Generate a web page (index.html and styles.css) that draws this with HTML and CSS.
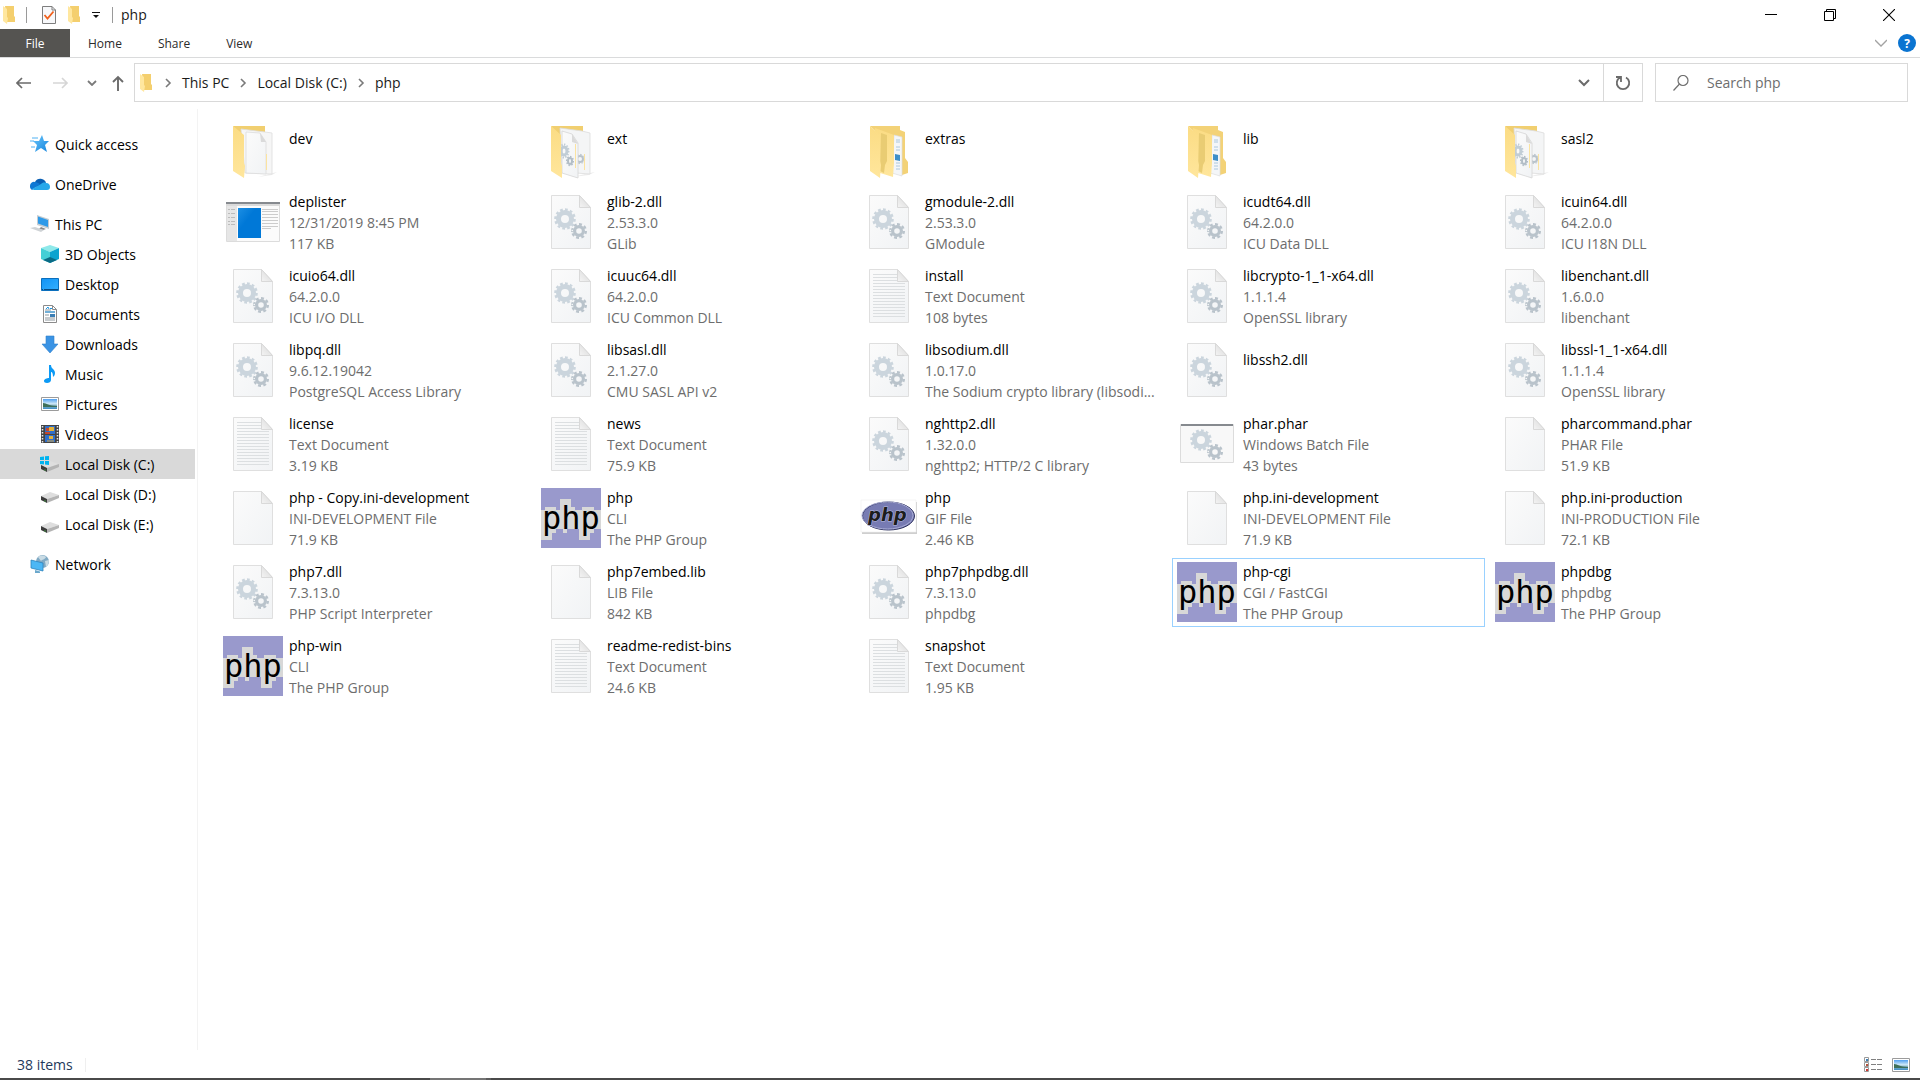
FILE: index.html
```html
<!DOCTYPE html>
<html lang="en">
<head>
<meta charset="utf-8">
<title>php</title>
<link rel="stylesheet" href="styles.css">
</head>
<body>
<svg class="defs" aria-hidden="true">
  <defs>
    <linearGradient id="paper" x1="0" y1="0" x2="1" y2="1"><stop offset="0" stop-color="#fbfbfb"/><stop offset="1" stop-color="#f1f3f5"/></linearGradient>
    <linearGradient id="fold" x1="0" y1="1" x2="1" y2="0"><stop offset="0" stop-color="#f4f4f4"/><stop offset="1" stop-color="#d6d6d6"/></linearGradient>
    <linearGradient id="flap" x1="0" y1="0" x2="0" y2="1"><stop offset="0" stop-color="#fbdc84"/><stop offset="1" stop-color="#ffe69c"/></linearGradient>
    <linearGradient id="blue" x1="0" y1="0" x2="1" y2="1"><stop offset="0" stop-color="#1d8fe4"/><stop offset=".4" stop-color="#0078d7"/></linearGradient>
    <linearGradient id="screen" x1="0" y1="0" x2="1" y2="1"><stop offset="0" stop-color="#1193f5"/><stop offset="1" stop-color="#35b0ff"/></linearGradient>
    <linearGradient id="sky" x1="0" y1="0" x2="0" y2="1"><stop offset="0" stop-color="#4f9ff0"/><stop offset=".5" stop-color="#d5ecf8"/><stop offset=".6" stop-color="#8fb9c9"/><stop offset="1" stop-color="#3f8ec6"/></linearGradient>
    <linearGradient id="star" x1="0" y1="0" x2="1" y2="1"><stop offset="0" stop-color="#6ac6fb"/><stop offset="1" stop-color="#1484dd"/></linearGradient>
  </defs>
  <symbol id="gears" viewBox="0 0 60 60">
    <g fill="none" stroke="#cbd5dd">
      <circle cx="24" cy="27" r="6.5" stroke-width="5"/>
      <circle cx="24" cy="27" r="9.5" stroke-width="2.6" pathLength="24" stroke-dasharray="1.1 .9"/>
    </g>
    <g fill="none" stroke="#b9c3cb">
      <circle cx="38" cy="39" r="4.4" stroke-width="3.2"/>
      <circle cx="38" cy="39" r="6.8" stroke-width="2.4" pathLength="16" stroke-dasharray="1.1 .9"/>
    </g>
  </symbol>
  <symbol id="blank" viewBox="0 0 60 60">
    <path d="M10.5 3.5h28l11 12v41h-39z" fill="url(#paper)" stroke="#dfdfdf"/>
    <path d="M38.500 3.500v12h11z" fill="url(#fold)" stroke="#d9d9d9"/>
  </symbol>
  <symbol id="dll" viewBox="0 0 60 60"><use href="#blank"/><use href="#gears"/></symbol>
  <symbol id="txt" viewBox="0 0 60 60">
    <use href="#blank"/>
    <path d="M14 8.500h24M14 11.500h24M14 14.500h24M14 17.500h32M14 20.500h32M14 23.500h32M14 26.500h32M14 29.500h32M14 32.500h32M14 35.500h32M14 38.500h32M14 41.500h32M14 44.500h32M14 47.500h32M14 50.500h32" stroke="#dcdfe1"/>
  </symbol>
  <symbol id="exe" viewBox="0 0 60 60">
    <path d="M3.500 10.500h53v39h-53z" fill="#fbfbfb" stroke="#dcdcdc"/>
    <path d="M4 14h10v35H4z" fill="#e6e6e6"/>
    <path d="M3 10h54v2H3z" fill="#868a8f"/>
    <path d="M3 12h54v2H3z" fill="#dadada"/>
    <path d="M5 17.500h7M5 21.500h7M5 25.500h7M5 29.500h7M5 32.500h7" stroke="#bcbcbc" stroke-dasharray="2 1 4"/>
    <path d="M39 17.500h16M39 19.500h16M39 22.500h16M39 25.500h16M39 28.500h16M39 31.500h16M39 34.500h16M39 36.500h9" stroke="#cccccc"/>
    <path d="M15 16h23v30H15z" fill="url(#blue)"/>
  </symbol>
  <symbol id="bat" viewBox="0 0 60 60">
    <path d="M3.500 10.500h53v38h-53z" fill="#f8f8f8" stroke="#dcdcdc"/>
    <path d="M4 10h52v2H4z" fill="#868a8f"/>
    <use href="#gears" y="-1"/>
  </symbol>
  <symbol id="folder-page" viewBox="0 0 60 60">
    <path d="M46 54l8-2-5 3-14 2z" fill="#ececec"/>
    <path d="M10 6h32v20H20z" fill="#f1cf70"/>
    <path d="M18 9l24 3 7 1v41l-27-1z" fill="#f6f6f6" stroke="#dddddd" stroke-width=".8"/>
    <path d="M23 12l14 1 6 9v32l-20-1z" fill="url(#paper)" stroke="#dcdcdc" stroke-width=".8"/>
    <path d="M37 13l1 9h5z" fill="#dadada"/>
    <path d="M43.500 34v16" stroke="#fbe3a0"/>
    <path d="M10 6l11 9v28l1 3-1 12-11-7z" fill="url(#flap)"/>
  </symbol>
  <symbol id="folder-gears" viewBox="0 0 60 60">
    <path d="M44 54l10-2-6 3-16 2z" fill="#ececec"/>
    <path d="M10 6h32v16H20z" fill="#f1cf70"/>
    <path d="M19 8l22 3 8 2v41l-28-2z" fill="#f4f5f6" stroke="#dcdcdc" stroke-width=".8"/>
    <g fill="none" stroke="#b9c3cb"><circle cx="39" cy="39" r="3" stroke-width="2"/><circle cx="39" cy="39" r="4.600" pathLength="16" stroke-dasharray="1"/></g>
    <path d="M21 11l10 3 6 9v35l-16-5z" fill="url(#paper)" stroke="#d6d6d6" stroke-width=".8"/>
    <path d="M31 14v8l6 2z" fill="#dadada"/>
    <g fill="none" stroke="#c1cdd6"><ellipse cx="23" cy="31" rx="3" ry="4" stroke-width="3"/><ellipse cx="23" cy="31" rx="4.500" ry="6.500" stroke-width="2" pathLength="24" stroke-dasharray="1"/></g>
    <g fill="none" stroke="#b2bdc6"><ellipse cx="29" cy="41" rx="2" ry="3" stroke-width="2"/><ellipse cx="29" cy="41" rx="3.300" ry="4.600" stroke-width="1.500" pathLength="16" stroke-dasharray="1"/></g>
    <path d="M34.500 24v24M43.500 34v16" stroke="#fbe3a0"/>
    <path d="M10 6l10 9v28l1 3v12l-11-7z" fill="url(#flap)"/>
  </symbol>
  <symbol id="folder-folders" viewBox="0 0 60 60">
    <path d="M11 6h30v4l5 2v26l3 4v11l-6 2-22-40z" fill="#f3d277"/>
    <path d="M35 15l8 2v39l-10-3z" fill="#f4f6f8" stroke="#dddddd" stroke-width=".7"/>
    <path d="M37 20h4M37 22h4M37 27h4M37 30h4M37 43h4M37 46h4M37 49h4" stroke="#9bbdd6" stroke-width=".8"/>
    <path d="M36 34l5 1v6l-5-1z" fill="#3e8fc8"/>
    <path d="M16 8l19 7v28l-1 14-16-5z" fill="url(#flap)"/>
    <path d="M22 13l6 2v26l-2 4-1 8-4-2z" fill="#e9cc73"/>
    <path d="M11 6l10 9v26l1 4-1 13-10-7z" fill="url(#flap)"/>
  </symbol>
  <symbol id="phpexe" viewBox="0 0 60 60">
    <path d="M0 0h60v60H0z" fill="#9999cc"/>
    <path d="M19 11h11v8h4v3h7v-3h12v3h7v19h-7v4h-4v3h-0v4H38v-11h-4v-0h-8v4h-4v-4h-7v4h-4v7H0V22h4v-3h11v3h4z" fill="#d8d8d8"/>
  </symbol>
  <symbol id="gif" viewBox="0 0 60 60">
    <path d="M3 14h55v32H3z" fill="#cfcfcf"/>
    <path d="M2 12h55v32H2z" fill="#ffffff" stroke="#eeeeee" stroke-width=".6"/>
    <ellipse cx="29.500" cy="28" rx="26" ry="14" fill="#777bb3" stroke="#30345f"/>
    <ellipse cx="28.500" cy="27.500" rx="25.500" ry="13.500" fill="none" stroke="#a9acd6"/>
  </symbol>
  <symbol id="folder" viewBox="0 0 12 18">
    <path d="M2 0h9v10l1 1v5H4z" fill="#f4cf6e"/>
    <path d="M0 0l4 3v8l1 1-1 6-4-3z" fill="#ffe79f"/>
  </symbol>
  <symbol id="chev" viewBox="0 0 12 12"><path d="M4 2l4 4-4 4" fill="none" stroke="#7a7a7a" stroke-width="1.600"/></symbol>
  <symbol id="disk" viewBox="0 0 20 20">
    <path d="M1 12l9-4 9 3-12 4z" fill="#dedede"/><path d="M7 15l12-4v3L7 19z" fill="#b4b4b4"/><path d="M1 12l6 3v4l-6-3z" fill="#3c3c3c"/><path d="M5 16.500v1" stroke="#3fd23f"/>
  </symbol>
  <symbol id="picture" viewBox="0 0 20 20">
    <path d="M1.500 3.500h17v13h-17z" fill="#fff" stroke="#9b9b9b"/><path d="M3 5h14v10H3z" fill="url(#sky)"/><path d="M3 9c4 0 5 3 14 3v1H3z" fill="#3e6f59"/>
  </symbol>
</svg>

<header>
  <div class="titlebar">
    <svg class="mini-folder" aria-hidden="true"><use href="#folder"/></svg>
    <span class="rule rule-first"></span>
    <button class="quick" aria-label="Properties"><svg width="14" height="18" viewBox="0 0 14 18"><path d="M.5.500h9.500l3.500 3.500v13.500H.5z" fill="#f7f8fa" stroke="#7e7e7e"/><path d="M10 .500v3.500h3.500" fill="none" stroke="#7e7e7e"/><path d="M2.500 9l3 3.500 6-7" fill="none" stroke="#f0601c" stroke-width="1.800"/></svg></button>
    <button class="quick" aria-label="New folder"><svg class="mini-folder"><use href="#folder"/></svg></button>
    <button class="quick" aria-label="Customize Quick Access Toolbar"><svg width="8" height="8" viewBox="0 0 8 8"><path d="M0 1.500h8" stroke="#111"/><path d="M1 4h6L4 7z" fill="#111"/></svg></button>
    <span class="rule"></span>
    <h1>php</h1>
    <div class="controls">
      <button aria-label="Minimize"><svg width="12" height="12"><path d="M0 5.500h12" stroke="#000"/></svg></button>
      <button aria-label="Restore"><svg width="12" height="12" fill="none" stroke="#000"><path d="M.5 2.500h9v9h-9zM2.500 2.500v-2h9v9h-2"/></svg></button>
      <button aria-label="Close"><svg width="12" height="12" stroke="#000" stroke-width="1.100"><path d="M0 0l12 12M12 0L0 12"/></svg></button>
    </div>
  </div>
  <div class="ribbon">
    <button class="tab tab-file">File</button>
    <button class="tab">Home</button>
    <button class="tab">Share</button>
    <button class="tab">View</button>
    <button class="expand" aria-label="Expand the ribbon"><svg width="12" height="8"><path d="M0 1l6 6 6-6" fill="none" stroke="#a3a3a3" stroke-width="1.300"/></svg></button>
    <button class="help" aria-label="Help">?</button>
  </div>
  <div class="navbar">
    <div class="history">
      <button aria-label="Back"><svg width="16" height="12" fill="none" stroke="#6b6b6b" stroke-width="1.700"><path d="M15 6H1M6 1L1 6l5 5"/></svg></button>
      <button aria-label="Forward" disabled><svg width="16" height="12" fill="none" stroke="#d6d6d6" stroke-width="1.700"><path d="M0 6h14M9 1l5 5-5 5"/></svg></button>
      <button aria-label="Recent locations"><svg width="10" height="6" fill="none" stroke="#7a7a7a" stroke-width="1.800"><path d="M1 1l4 4 4-4"/></svg></button>
      <button aria-label="Up"><svg width="12" height="16" fill="none" stroke="#6b6b6b" stroke-width="1.900"><path d="M6 16V2M1 7l5-5 5 5"/></svg></button>
    </div>
    <div class="address">
      <nav class="crumbs" aria-label="Path">
        <svg class="mini-folder" aria-hidden="true"><use href="#folder"/></svg>
        <svg class="chev" aria-hidden="true"><use href="#chev"/></svg><a href="#">This PC</a>
        <svg class="chev" aria-hidden="true"><use href="#chev"/></svg><a href="#">Local Disk (C:)</a>
        <svg class="chev" aria-hidden="true"><use href="#chev"/></svg><a href="#">php</a>
      </nav>
      <button class="previous" aria-label="Previous locations"><svg width="12" height="8" fill="none" stroke="#6b6b6b" stroke-width="2"><path d="M1 1l5 5 5-5"/></svg></button>
      <button class="refresh" aria-label="Refresh"><svg width="16" height="16" fill="none" stroke="#6b6b6b" stroke-width="1.800"><path d="M11 2.500a6.200 6.200 0 1 1-6 0M1 2h5v5"/></svg></button>
    </div>
    <label class="search"><svg width="16" height="16" fill="none" stroke="#6f6f6f" stroke-width="1.200" aria-hidden="true"><circle cx="10" cy="5.500" r="5"/><path d="M6.500 9L.5 15.500"/></svg><input type="text" placeholder="Search php" aria-label="Search php"></label>
  </div>
</header>

<main>
  <nav class="tree" aria-label="Folders">
    <ul>
      <li><a href="#"><svg viewBox="0 0 20 20"><path d="M12 1l2 6h5l-4 4 2 7-6-4-6 4 2-7-4-4 6 0z" fill="url(#star)"/><path d="M2 4h6M0 7h4M1 13h4" stroke="#4fb0f2"/></svg>Quick access</a></li>
      <li><a href="#"><svg viewBox="0 0 20 20"><path d="M5 8a6 6 0 0 1 11 1l-6 5-6-2z" fill="#0a5fb4"/><path d="M0 12a4 4 0 0 1 5-4c2 0 3 1 5 2l-8 6a4 4 0 0 1-2-4z" fill="#0f78d4"/><path d="M2 15l9-5c1-1 3-2 5-1 3 0 4 2 4 4s-1 3-3 3H4z" fill="#28a8ea"/></svg>OneDrive</a></li>
      <li><a href="#"><svg viewBox="0 0 20 20"><path d="M7 1l12 4v10L7 11z" fill="#c6cdd2"/><path d="M8 2.500l10 3.500v7L8 9.500z" fill="#2f9ae8"/><path d="M11 13l5 2-3 1-4-1z" fill="#888"/><path d="M0 14l5-1 9 3-3 2z" fill="#cfd3d6"/></svg>This PC</a>
        <ul>
          <li><a href="#"><svg viewBox="0 0 20 20"><path d="M10 1l9 3-9 4-9-4z" fill="#8fe9ea"/><path d="M1 4l9 4v11l-9-4z" fill="#43cfd6"/><path d="M19 4l-9 4v11l9-4z" fill="#0ba3cf"/><path d="M10 13l7 3-7 3-7-3z" fill="#0a6b85"/></svg>3D Objects</a></li>
          <li><a href="#"><svg viewBox="0 0 20 20"><path d="M1.500 4.500h17v12h-17z" fill="url(#screen)" stroke="#0b6fbd"/><path d="M2 15.500h16" stroke="#094c83" stroke-dasharray="1 1 13 0"/></svg>Desktop</a></li>
          <li><a href="#"><svg viewBox="0 0 20 20"><path d="M3.500 1.500h9l4 4v13h-13z" fill="#fff" stroke="#8b8b8b"/><path d="M12.500 1.500v4h4" fill="none" stroke="#8b8b8b"/><path d="M5 6h6M5 8h10M5 14h10M5 16h10M5 11h4" stroke="#8d979e"/><path d="M6 5l2-2 1 2M10 4.500h2M5 8h10" stroke="#1b93e0" fill="none"/><path d="M10 10h5v3h-5z" fill="#3b7fb5"/></svg>Documents</a></li>
          <li><a href="#"><svg viewBox="0 0 20 20"><path d="M6 2h8v8h4l-8 9-8-9h4z" fill="#3a93e4" stroke="#2f7fcb" stroke-width=".6"/></svg>Downloads</a></li>
          <li><a href="#"><svg viewBox="0 0 20 20"><path d="M9 1h2c0 4 4 4 4 8 0 2-1 3-2 4 0-4-1-5-2-5v8c0 2-2 3-4 3s-3-1-3-2c0-2 3-3 5-3z" fill="#0c9af5"/></svg>Music</a></li>
          <li><a href="#"><svg><use href="#picture"/></svg>Pictures</a></li>
          <li><a href="#"><svg viewBox="0 0 20 20"><path d="M1 1h18v18H1z" fill="#444"/><path d="M5 2h10v8H5zM5 11h10v7H5z" fill="#2f6fc9"/><path d="M9 3h5v4H9zM9 12h4v3H9z" fill="#e3b23a"/><path d="M5 8h5v2H5zM6 4h3v3H6z" fill="#c5482c"/><path d="M7 17h7" stroke="#e0a83a"/><path d="M2.500 2v17M17.500 2v17" stroke="#e8e8e8" stroke-width="1.500" stroke-dasharray="1.500"/></svg>Videos</a></li>
          <li><a href="#" class="current" aria-current="page"><svg viewBox="0 0 20 20"><use href="#disk" y="-1"/><path d="M0 3l4-.5V6H0zM5 2.300L9 2v4H5zM0 7h4v3.500L0 10zM5 7h4v4l-4-.4z" fill="#00b4f0"/></svg>Local Disk (C:)</a></li>
          <li><a href="#"><svg><use href="#disk"/></svg>Local Disk (D:)</a></li>
          <li><a href="#"><svg><use href="#disk"/></svg>Local Disk (E:)</a></li>
        </ul>
      </li>
      <li><a href="#"><svg viewBox="0 0 20 20"><circle cx="12.500" cy="7.500" r="6.500" fill="#7fa9c4"/><path d="M8 3c2-2 6-2 8 0-1 3-4 2-5 4zM15 7l4-1c0 3-1 5-3 7z" fill="#c9dbe4"/><path d="M1 6l12 3v8L1 14z" fill="#4cb7f5" stroke="#2b83bd" stroke-width=".8"/><path d="M5 16l5 1.500v1.500H5z" fill="#6ba8cc"/></svg>Network</a></li>
    </ul>
  </nav>

  <ul class="files">
    <li><a href="#"><svg><use href="#folder-page"/></svg><span class="info two"><b>dev</b></span></a></li>
    <li><a href="#"><svg><use href="#folder-gears"/></svg><span class="info two"><b>ext</b></span></a></li>
    <li><a href="#"><svg><use href="#folder-folders"/></svg><span class="info two"><b>extras</b></span></a></li>
    <li><a href="#"><svg><use href="#folder-folders"/></svg><span class="info two"><b>lib</b></span></a></li>
    <li><a href="#"><svg><use href="#folder-gears"/></svg><span class="info two"><b>sasl2</b></span></a></li>

    <li><a href="#"><svg><use href="#exe"/></svg><span class="info"><b>deplister</b><span>12/31/2019 8:45 PM</span><span>117 KB</span></span></a></li>
    <li><a href="#"><svg><use href="#dll"/></svg><span class="info"><b>glib-2.dll</b><span>2.53.3.0</span><span>GLib</span></span></a></li>
    <li><a href="#"><svg><use href="#dll"/></svg><span class="info"><b>gmodule-2.dll</b><span>2.53.3.0</span><span>GModule</span></span></a></li>
    <li><a href="#"><svg><use href="#dll"/></svg><span class="info"><b>icudt64.dll</b><span>64.2.0.0</span><span>ICU Data DLL</span></span></a></li>
    <li><a href="#"><svg><use href="#dll"/></svg><span class="info"><b>icuin64.dll</b><span>64.2.0.0</span><span>ICU I18N DLL</span></span></a></li>

    <li><a href="#"><svg><use href="#dll"/></svg><span class="info"><b>icuio64.dll</b><span>64.2.0.0</span><span>ICU I/O DLL</span></span></a></li>
    <li><a href="#"><svg><use href="#dll"/></svg><span class="info"><b>icuuc64.dll</b><span>64.2.0.0</span><span>ICU Common DLL</span></span></a></li>
    <li><a href="#"><svg><use href="#txt"/></svg><span class="info"><b>install</b><span>Text Document</span><span>108 bytes</span></span></a></li>
    <li><a href="#"><svg><use href="#dll"/></svg><span class="info"><b>libcrypto-1_1-x64.dll</b><span>1.1.1.4</span><span>OpenSSL library</span></span></a></li>
    <li><a href="#"><svg><use href="#dll"/></svg><span class="info"><b>libenchant.dll</b><span>1.6.0.0</span><span>libenchant</span></span></a></li>

    <li><a href="#"><svg><use href="#dll"/></svg><span class="info"><b>libpq.dll</b><span>9.6.12.19042</span><span>PostgreSQL Access Library</span></span></a></li>
    <li><a href="#"><svg><use href="#dll"/></svg><span class="info"><b>libsasl.dll</b><span>2.1.27.0</span><span>CMU SASL API v2</span></span></a></li>
    <li><a href="#"><svg><use href="#dll"/></svg><span class="info"><b>libsodium.dll</b><span>1.0.17.0</span><span>The Sodium crypto library (libsodi...</span></span></a></li>
    <li><a href="#"><svg><use href="#dll"/></svg><span class="info two"><b>libssh2.dll</b></span></a></li>
    <li><a href="#"><svg><use href="#dll"/></svg><span class="info"><b>libssl-1_1-x64.dll</b><span>1.1.1.4</span><span>OpenSSL library</span></span></a></li>

    <li><a href="#"><svg><use href="#txt"/></svg><span class="info"><b>license</b><span>Text Document</span><span>3.19 KB</span></span></a></li>
    <li><a href="#"><svg><use href="#txt"/></svg><span class="info"><b>news</b><span>Text Document</span><span>75.9 KB</span></span></a></li>
    <li><a href="#"><svg><use href="#dll"/></svg><span class="info"><b>nghttp2.dll</b><span>1.32.0.0</span><span>nghttp2; HTTP/2 C library</span></span></a></li>
    <li><a href="#"><svg><use href="#bat"/></svg><span class="info"><b>phar.phar</b><span>Windows Batch File</span><span>43 bytes</span></span></a></li>
    <li><a href="#"><svg><use href="#blank"/></svg><span class="info"><b>pharcommand.phar</b><span>PHAR File</span><span>51.9 KB</span></span></a></li>

    <li><a href="#"><svg><use href="#blank"/></svg><span class="info"><b>php - Copy.ini-development</b><span>INI-DEVELOPMENT File</span><span>71.9 KB</span></span></a></li>
    <li><a href="#"><svg><use href="#phpexe"/><text x="1" y="41" class="pixel-logo">php</text></svg><span class="info"><b>php</b><span>CLI</span><span>The PHP Group</span></span></a></li>
    <li><a href="#"><svg><use href="#gif"/><text x="9" y="33" class="oval-logo">php</text></svg><span class="info"><b>php</b><span>GIF File</span><span>2.46 KB</span></span></a></li>
    <li><a href="#"><svg><use href="#blank"/></svg><span class="info"><b>php.ini-development</b><span>INI-DEVELOPMENT File</span><span>71.9 KB</span></span></a></li>
    <li><a href="#"><svg><use href="#blank"/></svg><span class="info"><b>php.ini-production</b><span>INI-PRODUCTION File</span><span>72.1 KB</span></span></a></li>

    <li><a href="#"><svg><use href="#dll"/></svg><span class="info"><b>php7.dll</b><span>7.3.13.0</span><span>PHP Script Interpreter</span></span></a></li>
    <li><a href="#"><svg><use href="#blank"/></svg><span class="info"><b>php7embed.lib</b><span>LIB File</span><span>842 KB</span></span></a></li>
    <li><a href="#"><svg><use href="#dll"/></svg><span class="info"><b>php7phpdbg.dll</b><span>7.3.13.0</span><span>phpdbg</span></span></a></li>
    <li><a href="#" class="focused"><svg><use href="#phpexe"/><text x="1" y="41" class="pixel-logo">php</text></svg><span class="info"><b>php-cgi</b><span>CGI / FastCGI</span><span>The PHP Group</span></span></a></li>
    <li><a href="#"><svg><use href="#phpexe"/><text x="1" y="41" class="pixel-logo">php</text></svg><span class="info"><b>phpdbg</b><span>phpdbg</span><span>The PHP Group</span></span></a></li>

    <li><a href="#"><svg><use href="#phpexe"/><text x="1" y="41" class="pixel-logo">php</text></svg><span class="info"><b>php-win</b><span>CLI</span><span>The PHP Group</span></span></a></li>
    <li><a href="#"><svg><use href="#txt"/></svg><span class="info"><b>readme-redist-bins</b><span>Text Document</span><span>24.6 KB</span></span></a></li>
    <li><a href="#"><svg><use href="#txt"/></svg><span class="info"><b>snapshot</b><span>Text Document</span><span>1.95 KB</span></span></a></li>
  </ul>
</main>

<footer>
  <span class="count">38 items</span>
  <button aria-label="Details view"><svg width="20" height="16"><path d="M.5.500h4v4h-4zM.5 5.500h4v4h-4zM.5 10.500h4v4h-4z" fill="#fff" stroke="#9a9a9a"/><path d="M2 2h2v2H2z" fill="#3b7fb5"/><path d="M2 7h2v2H2z" fill="#b5543b"/><path d="M2 12h2v2H2z" fill="#d0342c"/><path d="M7 2.500h5M13 2.500h5M7 7.500h5M13 7.500h5M7 12.500h5M13 12.500h5" stroke="#808080"/></svg></button>
  <button aria-label="Large thumbnails view"><svg width="20" height="20"><use href="#picture"/></svg></button>
</footer>
<div class="taskbar-edge"></div>
</body>
</html>
```
FILE: styles.css
```css
* { box-sizing: border-box; }

body {
  margin: 0;
  min-height: 100vh;
  display: flex;
  flex-direction: column;
  background: #fff;
  color: #000;
  font: 14px/21px "Open Sans", "Noto Sans", sans-serif;
}

ul { list-style: none; margin: 0; padding: 0; }
a { color: inherit; text-decoration: none; }
svg { display: block; flex: none; }
.defs { position: absolute; width: 0; height: 0; }

button {
  display: flex;
  align-items: center;
  justify-content: center;
  padding: 0;
  border: 0;
  background: none;
  color: inherit;
  font: inherit;
}

.mini-folder { width: 12px; height: 18px; }

/* Title bar */
.titlebar {
  display: flex;
  align-items: center;
  height: 29px;
  padding-left: 3px;
}
.rule { width: 1px; height: 16px; background: #9a9a9a; }
.rule-first { margin: 0 3px 0 11px; }
.quick { margin-left: 12px; }
.quick + .rule { margin: 0 8px 0 12px; }
h1 { margin: 0; font-size: 14px; font-weight: 400; color: #1a1a1a; }
.controls { display: flex; margin-left: auto; padding-right: 2px; }
.controls button { width: 59px; height: 28px; }

/* Ribbon tabs */
.ribbon {
  display: flex;
  align-items: center;
  height: 29px;
  padding-right: 4px;
  border-bottom: 1px solid #dadbdc;
  font-size: 12px;
  color: #2b2b2b;
}
.tab { height: 28px; padding: 0 18px; }
.tab-file { width: 70px; background: #555451; color: #fff; }
.expand { margin-left: auto; }
.help {
  width: 18px;
  height: 18px;
  margin-left: 11px;
  border-radius: 50%;
  background: #0a74d1;
  color: #fff;
  font-weight: 700;
}

/* Address row */
.navbar {
  display: flex;
  align-items: stretch;
  padding: 5px 12px 7px 0;
}
.history {
  display: flex;
  align-items: center;
  gap: 21px;
  width: 134px;
  padding-left: 16px;
}
.history button:nth-child(3) { margin: 0 -6px 0 -3px; }
.address { display: flex; flex: 1; height: 39px; border: 1px solid #d9d9d9; }
.crumbs { display: flex; flex: 1; align-items: center; padding-left: 5px; color: #1a1a1a; }
.chev { width: 12px; height: 12px; margin: 0 8px; }
.crumbs .mini-folder + .chev { margin-left: 10px; }
.previous { width: 38px; }
.refresh { width: 39px; border-left: 1px solid #d9d9d9; }
.search {
  display: flex;
  align-items: center;
  gap: 18px;
  width: 253px;
  margin-left: 12px;
  padding-left: 17px;
  border: 1px solid #d9d9d9;
}
.search input {
  flex: 1;
  min-width: 0;
  padding: 0;
  border: 0;
  outline: 0;
  background: none;
  font: inherit;
}
.search input::placeholder { color: #6d6d6d; opacity: 1; }

main { display: flex; flex: 1; }

/* Folder tree */
.tree { width: 198px; padding: 20px 2px 0 0; border-right: 1px solid #f3f3f3; }
.tree > ul { display: grid; gap: 10px; }
.tree a { display: flex; align-items: center; gap: 5px; height: 30px; padding-left: 30px; white-space: nowrap; }
.tree ul ul a { padding-left: 40px; }
.tree svg { width: 20px; height: 20px; }
.tree .current { background: #d9d9d9; }

/* File tiles */
.files {
  display: grid;
  flex: 1;
  grid-template-columns: repeat(auto-fill, 313px);
  gap: 5px;
  align-content: start;
  padding: 7px 0 0 20px;
}
.files a {
  display: flex;
  align-items: center;
  gap: 6px;
  height: 100%;
  padding: 2px 4px;
  border: 1px solid transparent;
}
.files .focused { border-color: #99d1ff; }
.files a > svg { width: 60px; height: 60px; margin-top: 1px; align-self: flex-start; }
.info { display: grid; min-width: 0; color: #6d6d6d; white-space: nowrap; }
.info b { color: #000; font-weight: 400; }
.two { min-height: 44px; align-content: start; }

.pixel-logo { font: 32px "DejaVu Sans Mono", monospace; fill: #000; }
.oval-logo { font: italic 700 18px "DejaVu Sans", sans-serif; fill: #1c1c1c; stroke: #b9bbdd; stroke-width: 1px; paint-order: stroke; }

/* Status bar */
footer { display: flex; align-items: center; gap: 7px; height: 28px; padding: 1px 9px 0 17px; }
.count { margin-right: auto; padding-right: 12px; border-right: 1px solid #efefef; line-height: 14px; color: #1e395b; }
.taskbar-edge {
  height: 2px;
  background: linear-gradient(90deg, #4a4a4a 430px, #757575 430px 486px, #5c5c5c 486px 491px, #4a4a4a 491px);
}
```
